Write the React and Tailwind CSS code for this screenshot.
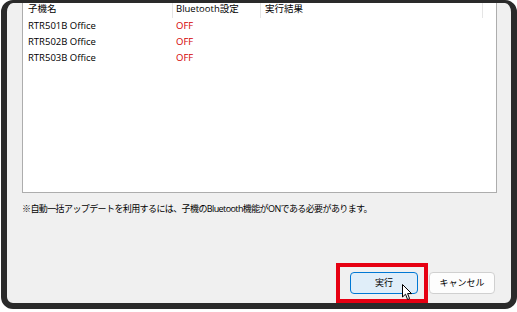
const rows = ["RTR501B Office", "RTR502B Office", "RTR503B Office"];

function Cursor() {
  return (
    <svg
      className="absolute left-[52px] top-[12px] h-[17px] w-[12px]"
      viewBox="0 0 12 17"
    >
      <path
        d="M0.5 0.5 L0.5 13 L3.5 10.2 L5.6 15.5 L7.6 14.7 L5.6 9.6 L9.6 9.6 Z"
        fill="#ffffff"
        stroke="#000000"
        strokeWidth="1"
        strokeLinejoin="round"
      />
    </svg>
  );
}

export default function App() {
  return (
    <div
      className="h-[312px] w-[517px] overflow-hidden bg-white"
      style={{ fontFamily: '"Open Sans", "Noto Sans CJK JP", sans-serif' }}
    >
      <div className="ml-[1px] flex h-[309px] w-[516px] flex-col rounded-[12px] border-[6px] border-t-[3px] border-[#2a2a2a] bg-[#f0f0f0]">
        {/* list */}
        <div className="ml-[15px] h-[190px] w-[475px] border-x border-b border-[#adadad] bg-white text-[9.5px] text-black">
          <div className="flex h-[15px] leading-[12px]">
            <div className="w-[149px] pl-[5px]">子機名</div>
            <div className="w-[88px] border-l border-[#e5e5e5] pl-[3px]">Bluetooth設定</div>
            <div className="w-[223px] border-x border-[#e5e5e5] pl-[4px]">実行結果</div>
          </div>
          {rows.map((name) => (
            <div key={name} className="flex h-[16px] leading-[16px]">
              <div className="w-[149px] pl-[5px]">{name}</div>
              <div className="pl-[4px] text-[#d40000]">OFF</div>
            </div>
          ))}
        </div>

        <p className="ml-[15px] mt-[10px] text-[9px] leading-[12px] tracking-[-0.6px] text-black">
          ※自動一括アップデートを利用するには、子機のBluetooth機能がONである必要があります。
        </p>

        <div className="flex-1" />

        <div className="flex justify-end gap-[11px] pb-[9px] pr-[16px] text-[9px] text-black">
          <div className="relative">
            <div className="absolute -left-[14px] -top-[9px] h-[40px] w-[92px] border-[4px] border-[#e60012]" />
            <button className="relative flex h-[22px] w-[68px] items-center justify-center rounded-[4px] border border-[#0078d4] bg-[#e0eef9]">
              実行
            </button>
            <Cursor />
          </div>
          <button className="flex h-[22px] w-[66px] items-center justify-center rounded-[4px] border border-[#d0d0d0] bg-[#fdfdfd]">
            キャンセル
          </button>
        </div>
      </div>
    </div>
  );
}
